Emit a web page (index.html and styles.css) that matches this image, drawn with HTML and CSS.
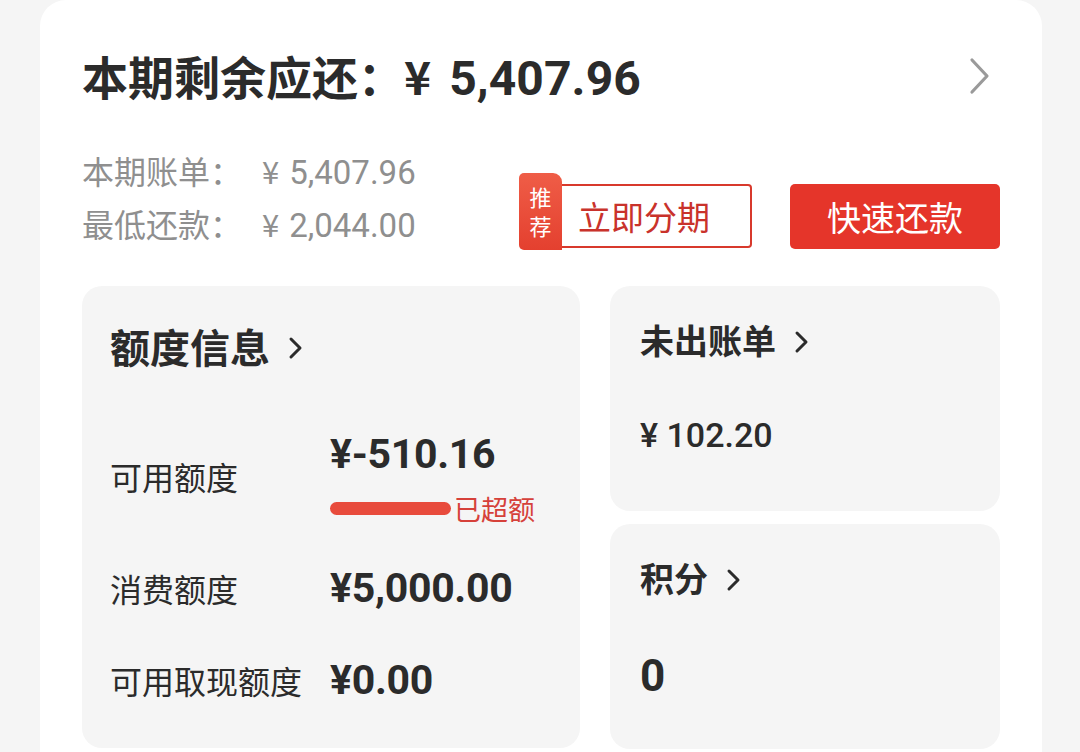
FILE: index.html
```html
<!DOCTYPE html>
<html lang="zh-CN">
<head>
<meta charset="utf-8">
<link rel="stylesheet" href="styles.css">
</head>
<body>
<div class="page">
  <div class="card">
    <div class="head">
      <div class="head-title">本期剩余应还：<span class="yen">¥</span><span class="num">5,407.96</span></div>
      <svg class="head-chev" width="24" height="38" viewBox="0 0 24 38"><polyline points="4,3 19,19 4,35" fill="none" stroke="#9a9a9a" stroke-width="3.2" stroke-linecap="round" stroke-linejoin="round"/></svg>
    </div>
    <div class="summary">
      <div class="sum-lines">
        <div class="sum-line">本期账单：<span class="yen">¥</span><span class="num">5,407.96</span></div>
        <div class="sum-line">最低还款：<span class="yen">¥</span><span class="num">2,044.00</span></div>
      </div>
      <div class="actions">
        <div class="stage">
          <div class="tag">推<br>荐</div>
          <div class="stage-btn">立即分期</div>
        </div>
        <div class="pay-btn">快速还款</div>
      </div>
    </div>
    <div class="grid">
      <div class="panel panel-left">
        <div class="panel-title">额度信息<svg class="chev" width="16" height="24" viewBox="0 0 16 24"><polyline points="3,3 12,12 3,21" fill="none" stroke="#2b2b2b" stroke-width="3" stroke-linecap="round" stroke-linejoin="round"/></svg></div>
        <div class="rows">
          <div class="row row-first">
            <div class="label">可用额度</div>
            <div class="val-block">
              <div class="value">¥-510.16</div>
              <div class="over"><span class="bar"></span><span class="over-txt">已超额</span></div>
            </div>
          </div>
          <div class="row row-second">
            <div class="label">消费额度</div>
            <div class="value">¥5,000.00</div>
          </div>
          <div class="row row-third">
            <div class="label">可用取现额度</div>
            <div class="value">¥0.00</div>
          </div>
        </div>
      </div>
      <div class="col-right">
        <div class="panel panel-small">
          <div class="panel-title small">未出账单<svg class="chev" width="16" height="24" viewBox="0 0 16 24"><polyline points="3,3 12,12 3,21" fill="none" stroke="#2b2b2b" stroke-width="3" stroke-linecap="round" stroke-linejoin="round"/></svg></div>
          <div class="bill">¥ 102.20</div>
        </div>
        <div class="panel panel-small">
          <div class="panel-title small">积分<svg class="chev" width="16" height="24" viewBox="0 0 16 24"><polyline points="3,3 12,12 3,21" fill="none" stroke="#2b2b2b" stroke-width="3" stroke-linecap="round" stroke-linejoin="round"/></svg></div>
          <div class="points">0</div>
        </div>
      </div>
    </div>
  </div>
</div>
</body>
</html>
```

FILE: styles.css
```css
* { box-sizing: border-box; }
html, body { margin: 0; padding: 0; }
body {
  background: #f5f5f5;
  font-family: Roboto, "Noto Sans CJK SC", sans-serif;
  color: #2b2b2b;
  width: 1080px;
  height: 752px;
  overflow: hidden;
}
.page {
  padding: 0 38px 0 40px;
}
.card {
  background: #ffffff;
  border-radius: 26px 26px 0 0;
  padding: 42px 42px 0 42px;
  height: 800px;
}
.head {
  display: flex;
  align-items: center;
  justify-content: space-between;
  height: 66px;
}
.head-title {
  font-family: "Noto Sans CJK SC", sans-serif;
  font-size: 46px;
  font-weight: 700;
  color: #2b2b2b;
  display: flex;
  align-items: baseline;
}
.head-title .num {
  font-family: Roboto, sans-serif;
  font-weight: 700;
  font-size: 48px;
  letter-spacing: 0.1px;
  margin-left: 18px;
}
.head-chev { margin-right: 8px; margin-top: 2px; }

.summary {
  display: flex;
  align-items: flex-start;
  margin-top: 37px;
}
.sum-lines {
  width: 437px;
  color: #8f8f8f;
  font-family: "Noto Sans CJK SC", sans-serif;
  font-size: 32px;
  line-height: 51px;
}
.sum-line { display: flex; align-items: baseline; }
.sum-line .yen { margin-left: 20px; font-size: 31px; }
.sum-line .num {
  font-family: Roboto, sans-serif;
  font-size: 33px;
  margin-left: 10px;
}
.actions {
  display: flex;
  align-items: flex-end;
  gap: 38px;
  margin-top: 28px;
}
.stage {
  display: flex;
  align-items: flex-end;
}
.tag {
  width: 43px;
  height: 77px;
  background: linear-gradient(180deg, #ef5d47, #e4402f);
  border-radius: 5px 9px 0 5px;
  color: #fff;
  font-family: "Noto Sans CJK SC", sans-serif;
  font-size: 22px;
  line-height: 29px;
  text-align: center;
  padding-top: 9px;
}
.stage-btn {
  width: 190px;
  height: 64px;
  border: 2px solid #d8392c;
  border-left: none;
  border-radius: 0 4px 4px 0;
  color: #c9322b;
  font-family: "Noto Sans CJK SC", sans-serif;
  font-size: 33px;
  display: flex;
  align-items: center;
  padding-left: 16px;
  margin-bottom: 2px;
}
.pay-btn {
  width: 210px;
  height: 65px;
  background: #e5352a;
  border-radius: 5px;
  color: #fff;
  font-family: "Noto Sans CJK SC", sans-serif;
  font-size: 34px;
  display: flex;
  align-items: center;
  justify-content: center;
  margin-bottom: 1px;
}

.grid {
  display: flex;
  gap: 30px;
  margin-top: 35px;
}
.panel {
  background: #f5f5f5;
  border-radius: 20px;
}
.panel-left {
  width: 498px;
  height: 462px;
  padding: 34px 28px 0 28px;
}
.panel-title {
  font-family: "Noto Sans CJK SC", sans-serif;
  font-size: 40px;
  font-weight: 700;
  line-height: 52px;
  display: flex;
  align-items: center;
  color: #2b2b2b;
}
.panel-title .chev { margin-left: 18px; margin-top: 4px; }
.panel-title.small { font-size: 34px; line-height: 46px; }
.panel-title.small .chev { margin-left: 18px; }

.rows { margin-top: 57px; }
.row {
  display: flex;
  align-items: center;
}
.label {
  width: 220px;
  font-family: "Noto Sans CJK SC", sans-serif;
  font-size: 32px;
  color: #2b2b2b;
}
.value {
  font-family: Roboto, "Noto Sans CJK SC", sans-serif;
  font-size: 41px;
  font-weight: 700;
  color: #2b2b2b;
  line-height: 50px;
  letter-spacing: -0.3px;
}
.val-block { display: flex; flex-direction: column; }
.over {
  display: flex;
  align-items: center;
  margin-top: 15px;
  height: 28px;
}
.bar {
  width: 121px;
  height: 13px;
  border-radius: 7px;
  background: #e84b3c;
}
.over-txt {
  margin-left: 3px;
  font-family: "Noto Sans CJK SC", sans-serif;
  font-size: 27px;
  color: #d6413a;
}
.row-second { margin-top: 41px; }
.row-third { margin-top: 42px; }

.col-right {
  width: 390px;
  display: flex;
  flex-direction: column;
  gap: 13px;
}
.panel-small {
  height: 225px;
  padding: 31px 30px 0 30px;
}
.bill {
  margin-top: 52px;
  font-family: Roboto, "Noto Sans CJK SC", sans-serif;
  font-size: 34px;
  font-weight: 500;
  color: #2b2b2b;
}
.points {
  margin-top: 49px;
  font-family: Roboto, sans-serif;
  font-size: 44px;
  font-weight: 700;
  color: #2b2b2b;
}
```
